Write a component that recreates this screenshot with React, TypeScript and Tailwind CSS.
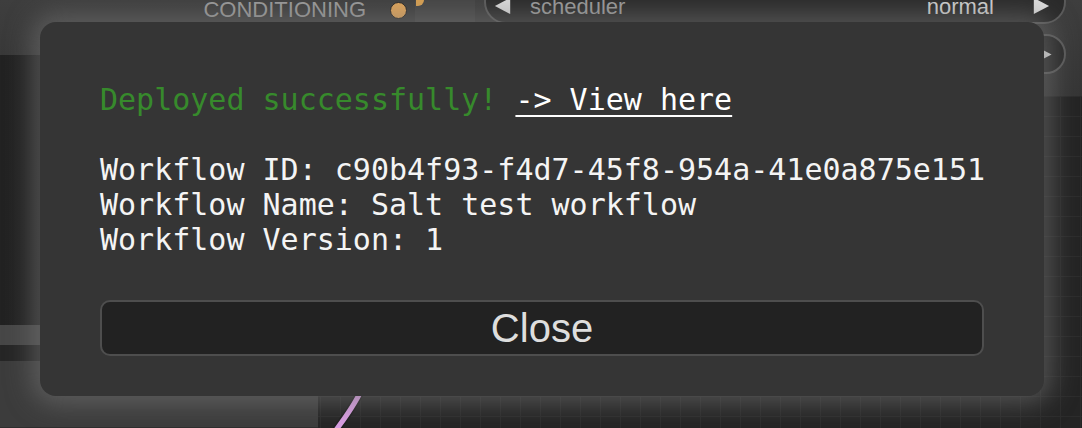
import React from 'react'

const mono = { fontFamily: '"DejaVu Sans Mono", Menlo, monospace' }

function Tri({ dir, size }: { dir: 'l' | 'r'; size: number }) {
  return (
    <svg width={size} height={size} viewBox="0 0 10 10" className="shrink-0">
      <path d={dir === 'l' ? 'M9 0.5 L0.5 5 L9 9.5 Z' : 'M1 0.5 L9.5 5 L1 9.5 Z'} fill="#dcdcdc" />
    </svg>
  )
}

function CanvasBackdrop() {
  return (
    <>
      {/* node strip along the top */}
      <div className="absolute left-0 top-0 w-[1082px] h-[96px] bg-gradient-to-b from-[#3e3e3e] to-[#353535]" />
      <div className="absolute left-[415px] top-0 w-[60px] h-[22px] bg-[#444]" />
      <div className="absolute left-[416px] top-0 w-[8px] h-[6px] rounded-br-full bg-[#d9a050]" />

      <div className="absolute right-[675px] top-[-3px] flex items-center gap-[24px] font-['Liberation_Sans',Arial,sans-serif] text-[22px] leading-[26px] text-[#9a9a9a]">
        <span>CONDITIONING</span>
        <span className="w-[17px] h-[17px] rounded-full bg-[#e3a65a] border-[1.5px] border-[#222]" />
      </div>

      {/* scheduler widget */}
      <div className="absolute left-[484px] top-[-20px] w-[582px] h-[44px] rounded-full border-2 border-[#5a5a5a] bg-[#2a2a2a] flex items-end pb-[2px] pl-[8px] pr-[14px] font-['Liberation_Sans',Arial,sans-serif] text-[22px] leading-[26px]">
        <span className="mb-[5px] mr-[18px]"><Tri dir="l" size={18} /></span>
        <span className="text-[#9a9a9a]">scheduler</span>
        <span className="ml-auto text-[#d0d0d0] mr-[38px]">normal</span>
        <span className="mb-[5px]"><Tri dir="r" size={18} /></span>
      </div>
      <div className="absolute left-[484px] top-[34px] w-[582px] h-[40px] rounded-full border-2 border-[#5a5a5a] bg-[#2a2a2a] flex items-center justify-end pr-[12px]">
        <Tri dir="r" size={9} />
      </div>

      {/* lower canvas */}
      <div className="absolute left-0 top-[96px] w-[1082px] h-[332px] bg-[#242424] bg-[linear-gradient(#2c2c2c_1px,transparent_1px),linear-gradient(90deg,#2c2c2c_1px,transparent_1px)] bg-[size:20px_20px]" />

      {/* left node */}
      <div className="absolute left-0 top-[55px] w-[318px] h-[373px] bg-[#3a3a3a] flex flex-col">
        <div className="h-[270px] bg-gradient-to-r from-[#222] to-[#2e2e2e]" />
        <div className="h-[20px] bg-[#474747]" />
        <div className="h-[16px] bg-[#262626]" />
        <div className="flex-1 bg-[#3c3c3c] border-b border-[#2e2e2e]" />
      </div>

      <svg className="absolute left-[320px] top-[380px]" width="60" height="48" viewBox="0 0 60 48">
        <path d="M44 4 C38 20 28 34 16 50" stroke="#1e1e1e" strokeWidth="8" fill="none" />
        <path d="M44 4 C38 20 28 34 16 50" stroke="#d99ee2" strokeWidth="5" fill="none" />
      </svg>
    </>
  )
}

export default function App() {
  return (
    <div className="relative w-[1082px] h-[428px] overflow-hidden bg-[#242424]">
      <CanvasBackdrop />

      <div className="absolute left-[40px] top-[22px] w-[1004px] h-[374px] rounded-[16px] bg-[#353535] shadow-[0_0_26px_8px_rgba(120,120,120,0.55)] pt-[60px] px-[60px] flex flex-col">
        <div style={mono} className="text-[30px] leading-[35px] text-[#f4f4f4] whitespace-pre">
          <div>
            <span className="text-[#378a2c]">Deployed successfully!</span>{' '}
            <a className="underline underline-offset-[5px] decoration-2 text-white">-&gt; View here</a>
          </div>
          <div>&nbsp;</div>
          <div>Workflow ID: c90b4f93-f4d7-45f8-954a-41e0a875e151</div>
          <div>Workflow Name: Salt test workflow</div>
          <div>Workflow Version: 1</div>
        </div>

        <button className="mt-[43px] w-[884px] h-[56px] rounded-[10px] border-2 border-[#4e4e4e] bg-[#222] text-[#dedede] font-['Liberation_Sans',Arial,sans-serif] text-[40px] leading-none">
          Close
        </button>
      </div>
    </div>
  )
}
